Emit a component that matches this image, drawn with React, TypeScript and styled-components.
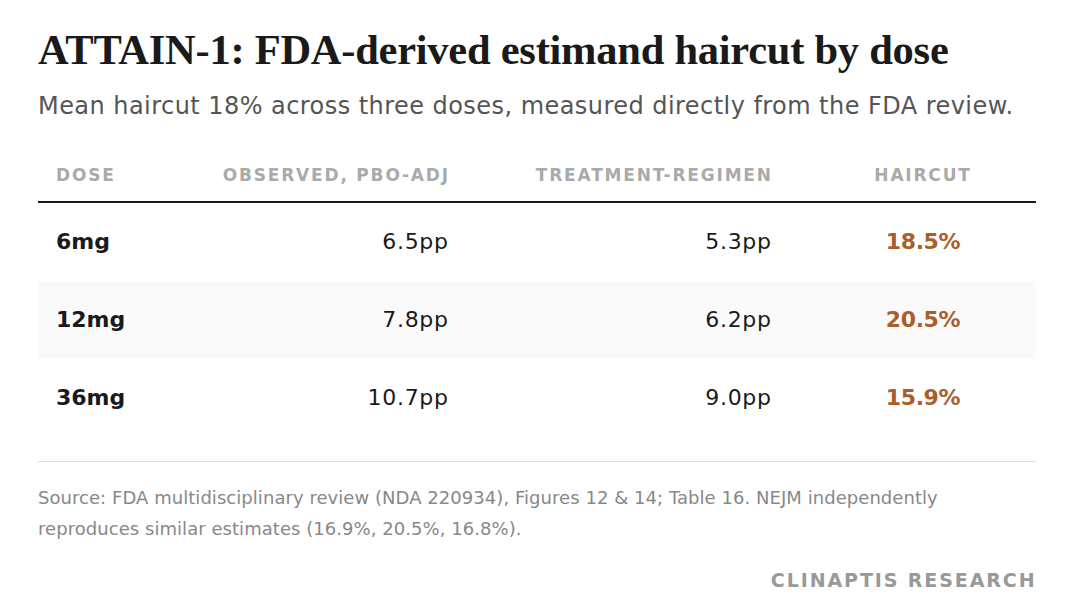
import React from 'react';
import styled, { createGlobalStyle } from 'styled-components';

const GlobalStyle = createGlobalStyle`
  html, body {
    margin: 0;
    padding: 0;
    background: #ffffff;
  }
  body {
    font-family: "DejaVu Sans", Inter, sans-serif;
    color: #1a1a1a;
  }
`;

const Page = styled.div`
  width: 998px;
  padding: 24px 48px 0 38px;
`;

const Title = styled.h1`
  font-family: "Liberation Serif", "DejaVu Serif", serif;
  font-weight: 700;
  font-size: 42.5px;
  line-height: 52px;
  letter-spacing: -0.25px;
  margin: 0;
  color: #1a1a1a;
`;

const Subtitle = styled.p`
  font-size: 24px;
  line-height: 30px;
  letter-spacing: 0.45px;
  color: #555555;
  margin: 15px 0 0 0;
`;

const Table = styled.div`
  margin-top: 44px;
`;

const Row = styled.div<{ $shaded?: boolean }>`
  display: grid;
  grid-template-columns: 160px 232px 323px 1fr;
  align-items: center;
  padding: 0 18px;
  height: 78px;
  background: ${p => (p.$shaded ? '#fafafa' : 'transparent')};
  box-sizing: border-box;
`;

const HeadRow = styled.div`
  display: grid;
  grid-template-columns: 160px 232px 323px 1fr;
  align-items: end;
  padding: 0 18px 16px;
  border-bottom: 2px solid #1a1a1a;
`;

type Align = 'left' | 'right' | 'center';

const HeadCell = styled.div<{ $align: Align }>`
  font-size: 17px;
  line-height: 20px;
  font-weight: 700;
  letter-spacing: 1.8px;
  text-transform: uppercase;
  color: #aaaaaa;
  white-space: nowrap;
  text-align: ${p => p.$align};
  padding-left: ${p => (p.$align === 'center' ? '57px' : '0')};
  margin-right: ${p => (p.$align === 'right' ? '-1.8px' : '0')};
`;

const Cell = styled.div<{ $align: Align; $bold?: boolean; $accent?: boolean }>`
  font-size: 22px;
  line-height: 24px;
  font-weight: ${p => (p.$bold || p.$accent ? 700 : 400)};
  letter-spacing: ${p => (p.$accent ? '-0.4px' : p.$bold ? '0' : '0.7px')};
  color: ${p => (p.$accent ? '#a95e2c' : '#1a1a1a')};
  text-align: ${p => p.$align};
  padding-left: ${p => (p.$align === 'center' ? '57px' : '0')};
  margin-right: ${p => (p.$align === 'right' ? '-0.7px' : '0')};
`;

const Divider = styled.div`
  height: 1px;
  background: #dddddd;
  margin-top: 24px;
`;

const Source = styled.p`
  font-size: 18px;
  line-height: 31px;
  letter-spacing: 0.05px;
  color: #888888;
  margin: 20px 0 0 0;
  max-width: 960px;
`;

const Brand = styled.div`
  text-align: right;
  font-size: 19px;
  line-height: 24px;
  font-weight: 700;
  letter-spacing: 1.9px;
  color: #999999;
  margin-top: 24px;
  margin-right: -0.5px;
`;

const rows = [
  { dose: '6mg', observed: '6.5pp', regimen: '5.3pp', haircut: '18.5%' },
  { dose: '12mg', observed: '7.8pp', regimen: '6.2pp', haircut: '20.5%' },
  { dose: '36mg', observed: '10.7pp', regimen: '9.0pp', haircut: '15.9%' },
];

const App: React.FC = () => {
  return (
    <Page>
      <GlobalStyle />
      <Title>ATTAIN-1: FDA-derived estimand haircut by dose</Title>
      <Subtitle>Mean haircut 18% across three doses, measured directly from the FDA review.</Subtitle>

      <Table>
        <HeadRow>
          <HeadCell $align="left">Dose</HeadCell>
          <HeadCell $align="right">Observed, PBO-adj</HeadCell>
          <HeadCell $align="right">Treatment-regimen</HeadCell>
          <HeadCell $align="center">Haircut</HeadCell>
        </HeadRow>
        {rows.map((r, i) => (
          <Row key={r.dose} $shaded={i === 1}>
            <Cell $align="left" $bold>{r.dose}</Cell>
            <Cell $align="right">{r.observed}</Cell>
            <Cell $align="right">{r.regimen}</Cell>
            <Cell $align="center" $accent>{r.haircut}</Cell>
          </Row>
        ))}
      </Table>

      <Divider />
      <Source>
        Source: FDA multidisciplinary review (NDA 220934), Figures 12 &amp; 14; Table 16. NEJM independently
        reproduces similar estimates (16.9%, 20.5%, 16.8%).
      </Source>
      <Brand>CLINAPTIS RESEARCH</Brand>
    </Page>
  );
};

export default App;
